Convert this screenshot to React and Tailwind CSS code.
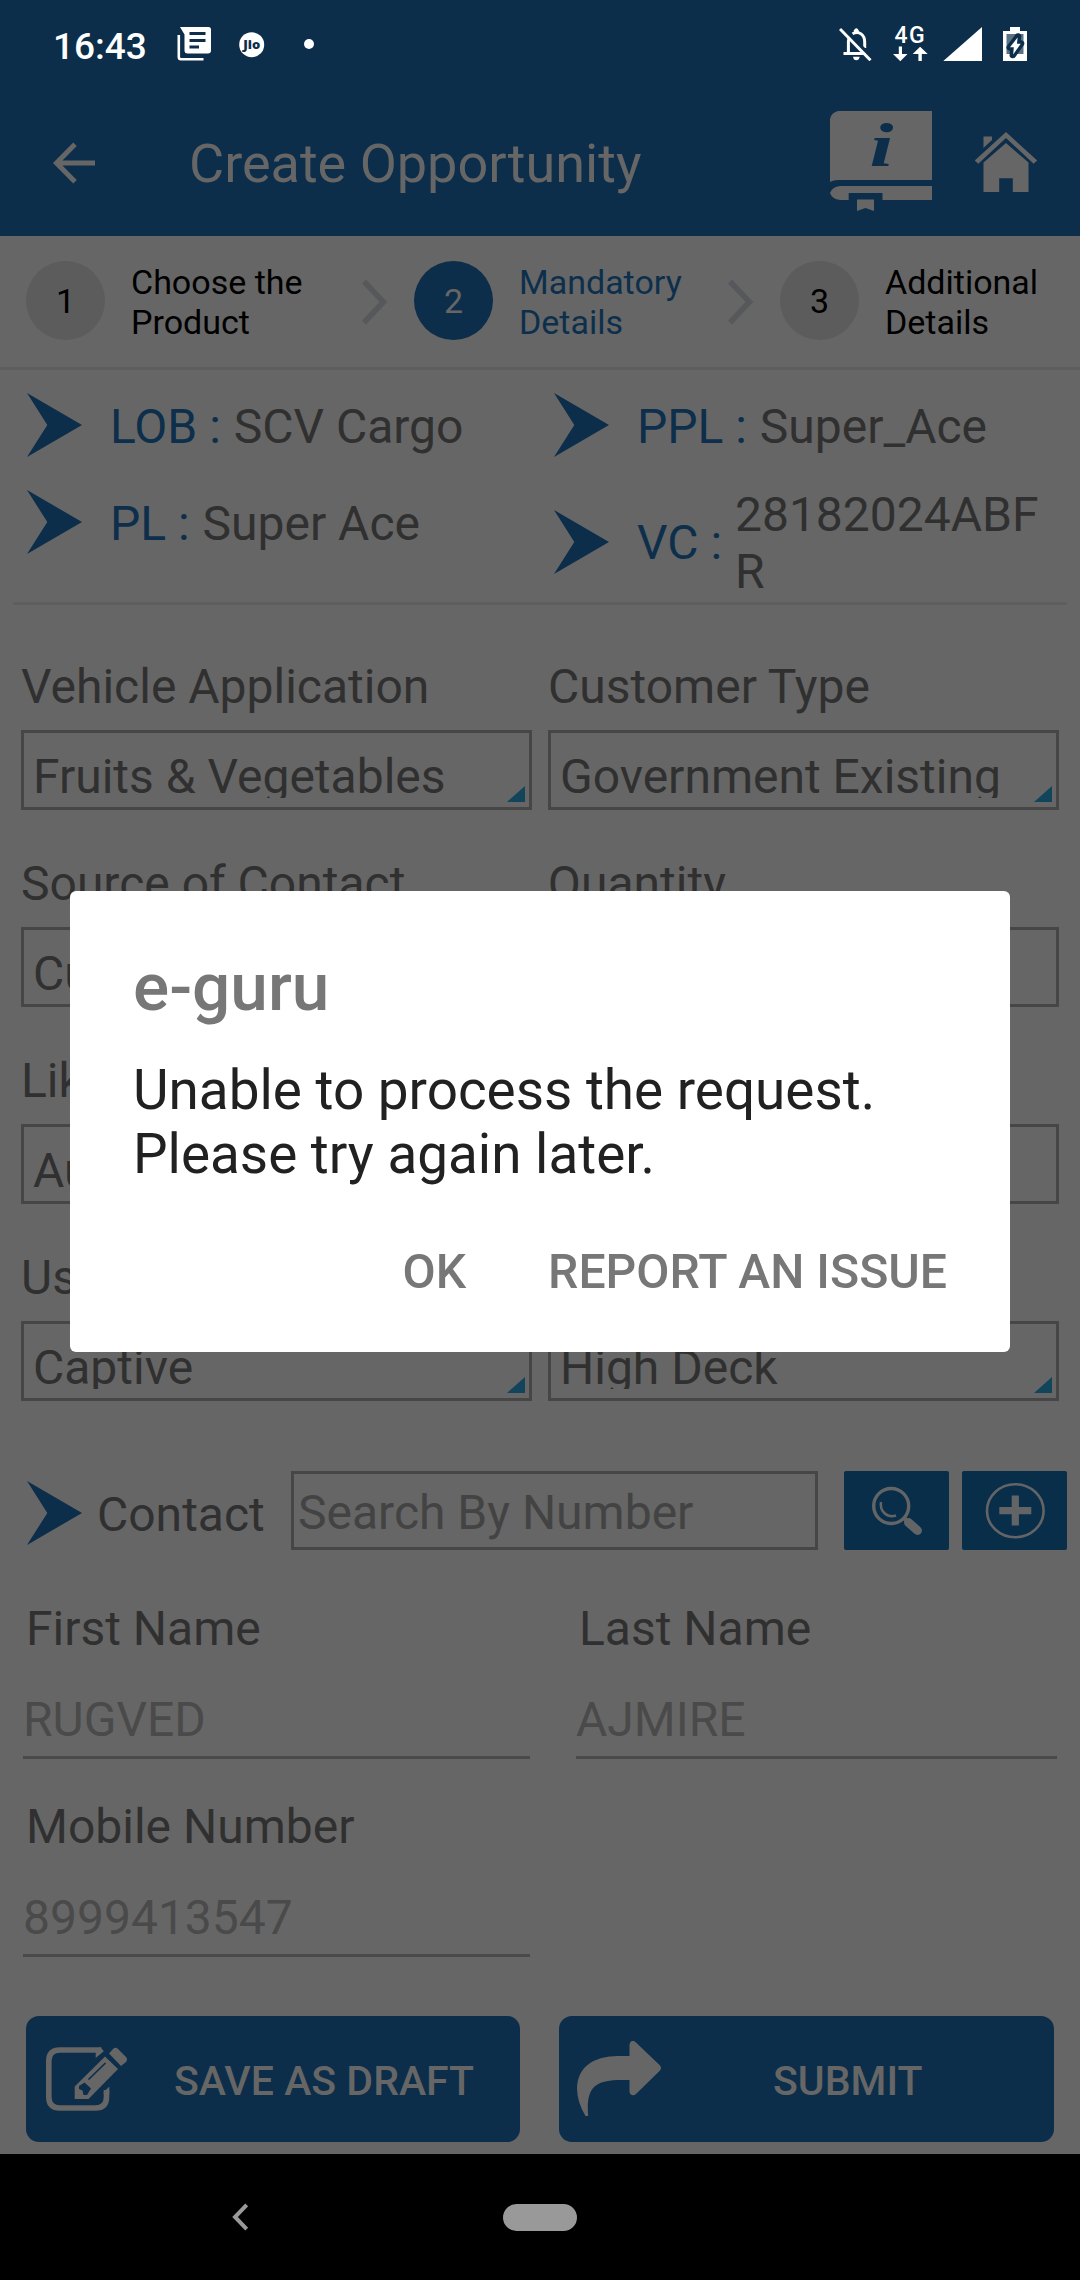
import React from "react";

function StatusBar() {
  return (
    <div className="flex h-[88px] items-center pl-[53px] pr-[53px] text-white">
      <div className="mt-[5px] w-[124px] text-[37px] font-medium leading-[44px]">16:43</div>
      <svg className="h-[34px] w-[34px]" viewBox="177 28 34 34">
        <path d="M180 28H208.500Q211 28 211 30.500V51.500Q211 54.500 208 54.500H187.500Q184.500 54.500 184.500 51.500V35.500Z" fill="#fff" />
        <path d="M189.500 34.500H205.500M189.500 41.500H205.500M189.500 48H199" stroke="#0c2e4a" strokeWidth="2.800" />
        <path d="M178.800 36V58Q178.800 60.200 181 60.200H203.500" fill="none" stroke="#fff" strokeWidth="2.600" />
      </svg>
      <svg className="ml-[28px] mt-px h-[26px] w-[26px]" viewBox="0 0 26 26">
        <circle cx="12.700" cy="12.700" r="12.500" fill="#fff" />
        <text x="12.700" y="17.200" textAnchor="middle" fontFamily="Open Sans, sans-serif" fontWeight="800" fontSize="13" fill="#0c2e4a">Jio</text>
      </svg>
      <div className="ml-[39px] h-[10px] w-[10px] rounded-full bg-white" />
      <svg className="ml-auto h-[34px] w-[33px]" viewBox="839 28 33 34">
        <path d="M843.500 54.500H863.500M848.400 55V42.500Q848.600 40 849.500 38M852.500 34.800C859 31 864.700 36 864.700 43V49" fill="none" stroke="#fff" strokeWidth="3" />
        <path d="M853.800 33V31.400Q856.300 27 858.800 31.400V33Z" fill="#fff" />
        <path d="M853 57.800H859.700Q859 61.300 856.300 61.300T853 57.800Z" fill="#fff" />
        <path d="M842.300 28.500L873 59" stroke="#0c2e4a" strokeWidth="3" />
        <path d="M840 30L870.500 61.200" stroke="#fff" strokeWidth="3" />
      </svg>
      <svg className="ml-[21px] h-[42px] w-[35px] overflow-visible" viewBox="893 23 35 42">
        <text x="894.500" y="43" fontFamily="Roboto, sans-serif" fontWeight="500" fontSize="23" letterSpacing="1.500" fill="#fff">4G</text>
        <path d="M898.800 46.500H902V54H907.500L900.300 61.300L893 54H898.800Z" fill="#fff" />
        <path d="M918.400 61H921.800V54H927.700L920.100 46.800L912.700 54H918.400Z" fill="#fff" />
      </svg>
      <svg className="ml-[15px] h-[34px] w-[39px]" viewBox="943 27 39 34">
        <path d="M943.300 61H982V27Z" fill="#fff" />
      </svg>
      <svg className="ml-[21px] h-[34px] w-[24px]" viewBox="1003 27 24 34">
        <path d="M1003 31H1010V27H1020V31H1027V61H1003Z" fill="#fff" />
        <path d="M1006.500 34H1023.500V54H1006.500Z" fill="#5b7285" />
        <path d="M1018 36.500L1009.800 47.500H1013.500L1012.800 55L1021 43.500H1017Z" fill="#0c2e4a" stroke="#0c2e4a" strokeWidth="6.500" strokeLinejoin="round" />
        <path d="M1017.600 37.500L1010 47.300H1013.800L1013.200 54.500L1020.700 43.700H1017Z" fill="#fff" />
      </svg>
    </div>
  );
}

function TitleBar() {
  return (
    <div className="flex h-[148px] items-center pl-[53px] pr-[42px]">
      <svg className="mt-px h-[42px] w-[43px]" viewBox="53 141.500 43 42" fill="none" stroke="#666666" strokeWidth="5">
        <path d="M95 162.500H57M75 143.700L56.500 162.500L75 181.300" />
      </svg>
      <h1 className="ml-[93px] mt-[3px] text-[54px] leading-[64px] text-[#666666]">Create Opportunity</h1>
      <svg className="ml-auto h-[102px] w-[102px]" viewBox="830 111 102 102" fill="#666666">
        <path d="M838 111H932V180H838Q833 180 830 182V119Q831 113 838 111Z" />
        <path d="M932 186V200H882.500V193H848.700V200H840Q832 199 830 193Q832 187 840 186Z" />
        <path d="M857 199.500H874V211L865.500 208L857 211Z" />
        <text x="869.500" y="166" fontFamily="Liberation Serif, serif" fontWeight="700" fontStyle="italic" fontSize="62" textLength="24" lengthAdjust="spacingAndGlyphs" fill="#0c2e4a">i</text>
      </svg>
      <svg className="ml-[43px] h-[62px] w-[63px]" viewBox="975 131 63 62" fill="#666666">
        <path d="M974.800 160.500L1006 132L1037.200 160.500L1033.600 163.800L1006 138L978.300 163.800Z" />
        <path d="M983.500 136.500H992V140L983.500 148Z" />
        <path d="M1006 143L1028.500 162.500V192H1012.800V178.300H999.200V192H983.500V162.500Z" />
      </svg>
    </div>
  );
}

function StepChevron() {
  return (
    <svg className="mr-[26px] h-[46px] w-[27px] shrink-0" viewBox="0 0 27 46" fill="none" stroke="#56585b" strokeWidth="5.500">
      <path d="M3 2.500L22.500 23L3 43.500" />
    </svg>
  );
}

function Stepper() {
  return (
    <div className="flex h-[134px] items-center border-b-[3px] border-[#5e5e5e] pl-[26px] text-[34px] leading-[40px] text-black">
      <div className="-mt-[2px] mr-[26px] flex h-[79px] w-[79px] shrink-0 items-center justify-center rounded-full bg-[#5c5c5c]">1</div>
      <div className="w-[230px] shrink-0">Choose the<br />Product</div>
      <StepChevron />
      <div className="-mt-[2px] mr-[26px] flex h-[79px] w-[79px] shrink-0 items-center justify-center rounded-full bg-[#0c2e4a] text-[#666666]">2</div>
      <div className="w-[208px] shrink-0 text-[#0d2f4c]">Mandatory<br />Details</div>
      <StepChevron />
      <div className="-mt-[2px] mr-[26px] flex h-[79px] w-[79px] shrink-0 items-center justify-center rounded-full bg-[#5c5c5c]">3</div>
      <div>Additional<br />Details</div>
    </div>
  );
}

function Arrowhead() {
  return (
    <svg className="h-[64px] w-[55px] shrink-0" viewBox="0 0 55 64" fill="#0c2e4a">
      <path d="M0 0L55 32L0 64L20.300 32Z" />
    </svg>
  );
}

function Info({ label, value }) {
  return (
    <div className="flex items-center">
      <Arrowhead />
      <span className="ml-[28px] mt-[4px] shrink-0 whitespace-pre text-[#0d2f4c]">{label} : </span>
      <span className="ml-px mt-[4px] break-all text-[#303030]">{value}</span>
    </div>
  );
}

function Summary() {
  return (
    <div className="mx-[13px] grid h-[235px] grid-cols-[527px_1fr] border-b-[3px] border-[#5e5e5e] pl-[14px] pt-[23px] text-[48px] leading-[56.500px]">
      <div className="flex flex-col gap-[33px]">
        <Info label="LOB" value="SCV Cargo" />
        <Info label="PL" value="Super Ace" />
      </div>
      <div className="flex flex-col gap-[26px] pr-[10px]">
        <Info label="PPL" value="Super_Ace" />
        <Info label="VC" value="28182024ABFR" />
      </div>
    </div>
  );
}

function Field({ label, value, select = true }) {
  return (
    <div className="h-[197px]">
      <div className="h-[56px] whitespace-nowrap leading-[58px]">{label}</div>
      <div className="relative mt-[16px] h-[80px] border-[3px] border-[#464646]">
        <div className="h-[65px] overflow-hidden whitespace-nowrap pl-[9px] pt-[16px] leading-[56px]">{value}</div>
        {select && (
          <svg className="absolute bottom-[5px] right-[4px] h-[16px] w-[18px]" viewBox="0 0 18 16" fill="#12455c">
            <path d="M0 16L18 0V16Z" />
          </svg>
        )}
      </div>
    </div>
  );
}

function Fields() {
  return (
    <div className="grid grid-cols-[511px_511px] gap-x-[16px] pl-[21px] pt-[53px] text-[48px] text-[#303030]">
      <Field label="Vehicle Application" value="Fruits & Vegetables" />
      <Field label="Customer Type" value="Government Existing" />
      <Field label="Source of Contact" value="Cu" select={false} />
      <Field label="Quantity" value="" select={false} />
      <Field label="Lik" value="Au" select={false} />
      <Field label="" value="" select={false} />
      <Field label="Us" value="Captive" />
      <Field label="" value="High Deck" />
    </div>
  );
}

function ContactSearch() {
  return (
    <div className="mt-[25px] flex h-[79px] text-[48px] leading-[56px] text-[#303030]">
      <div className="flex w-[291px] items-center pl-[27px] pt-[5px]">
        <Arrowhead />
        <span className="ml-[15px] mt-[3px]">Contact</span>
      </div>
      <div className="flex w-[527px] items-center border-[3px] border-[#464646] pl-[4px] pt-[5px] text-[#434343]">Search By Number</div>
      <button className="ml-[26px] flex w-[105px] items-center justify-center rounded-[2px] bg-[#092e4a]">
        <svg className="h-[50px] w-[54px]" viewBox="871 1485 54 50" fill="none" stroke="#626466">
          <circle cx="892.200" cy="1505" r="17.500" strokeWidth="3.400" />
          <path d="M882 1501C880.500 1510 888 1517.500 897 1514.500" strokeWidth="2.500" />
          <path d="M904.500 1516.500L909 1521" strokeWidth="4" />
          <path d="M909.500 1521.500L918.500 1529.500" strokeWidth="9" strokeLinecap="round" />
        </svg>
      </button>
      <button className="ml-[13px] flex w-[105px] items-center justify-center rounded-[2px] bg-[#092e4a]">
        <svg className="h-[58px] w-[60px]" viewBox="985 1482 60 58" fill="none" stroke="#626466">
          <ellipse cx="1015.300" cy="1510.700" rx="28.300" ry="26.500" strokeWidth="2.600" />
          <path d="M999.300 1510.700H1031.300M1015.300 1495.500V1525.500" strokeWidth="7.200" />
        </svg>
      </button>
    </div>
  );
}

function Detail({ label, value }) {
  return (
    <div className="flex flex-col border-b-[3px] border-[#4a4a4a] pb-[8px] leading-[56px]">
      <span className="ml-[3px] text-[#303030]">{label}</span>
      <span className="mt-[35px] text-[#4a4a4a]">{value}</span>
    </div>
  );
}

function Details() {
  return (
    <div className="grid grid-cols-[507px_481px] gap-x-[46px] gap-y-[40px] pl-[23px] pt-[51px] text-[48px]">
      <Detail label="First Name" value="RUGVED" />
      <Detail label="Last Name" value="AJMIRE" />
      <Detail label="Mobile Number" value="8999413547" />
    </div>
  );
}

function Actions() {
  return (
    <div className="mt-[59px] flex gap-[39px] pl-[26px] text-[41px] font-medium leading-[48px] text-[#666666]">
      <button className="flex h-[126px] w-[494px] items-center rounded-[13px] bg-[#0c2e4a] pl-[20px]">
        <svg className="h-[66px] w-[82px]" viewBox="46 2046 82 66" fill="#666666">
          <path d="M102 2049L98.500 2052V2050H60Q48.800 2050 48.800 2061V2097Q48.800 2108 60 2108H95.500Q106.500 2108 106.500 2097V2090" fill="none" stroke="#666666" strokeWidth="5.600" />
          <path d="M103.700 2094V2092L109.300 2086.500V2094Z" />
          <path d="M105 2056.500L118 2069L88.500 2099H74.700V2086.500Z" />
          <path d="M109 2053.500L113 2049Q115.500 2046.500 118 2049L126 2057Q128 2059.500 126 2062L121 2066Z" />
          <path d="M88.500 2079.500L105.500 2063" stroke="#0c2e4a" strokeWidth="1.700" />
          <path d="M79 2086L84.500 2082.500L91 2088.500L87 2095H83.500L82.500 2090.500L79 2089Z" fill="#0c2e4a" />
        </svg>
        <span className="ml-[46px] mt-[4px]">SAVE AS DRAFT</span>
      </button>
      <button className="flex h-[126px] w-[495px] items-center rounded-[13px] bg-[#0c2e4a] pl-[18px]">
        <svg className="h-[76px] w-[85px]" viewBox="577 2041 85 76" fill="#666666">
          <path d="M629.500 2056V2045Q630 2041 632.500 2041Q634 2040.500 636 2042.500L660 2065.500Q662 2068 660 2070.500L636 2094Q634 2096 632 2095Q629.500 2094.500 629.500 2091V2080H617C593 2081 586 2090 588.200 2116H585.500Q577 2102 577 2088C578 2066 594 2056.500 618 2056Z" />
        </svg>
        <span className="ml-[111px] mt-[4px]">SUBMIT</span>
      </button>
    </div>
  );
}

function NavBar() {
  return (
    <div className="mt-[12px] flex h-[126px] items-center bg-black pl-[232px]">
      <svg className="h-[28px] w-[17px]" viewBox="0 0 17 28" fill="none" stroke="#999999" strokeWidth="4">
        <path d="M14.700 1.800L3 14L14.700 26.200" />
      </svg>
      <div className="ml-[254px] h-[27px] w-[74px] rounded-full bg-[#999999]" />
    </div>
  );
}

function AlertDialog() {
  return (
    <div className="absolute left-[70px] top-[891px] flex h-[461px] w-[940px] flex-col rounded-[6px] bg-white pl-[63px] pt-[56px]">
      <h2 className="text-[67.500px] font-medium leading-[80px] text-[#777777]">e-guru</h2>
      <p className="mt-[31px] text-[54.850px] leading-[64px] text-[#212121]">
        Unable to process the request.<br />Please try again later.
      </p>
      <div className="mt-[58px] flex justify-end gap-[82px] pr-[63px] text-[48.150px] font-medium leading-[56px] text-[#777777]">
        <span>OK</span>
        <span>REPORT AN ISSUE</span>
      </div>
    </div>
  );
}

export default function App() {
  return (
    <div className="relative h-[2280px] w-[1080px] overflow-hidden bg-[#666666] font-['Roboto',sans-serif]">
      <header className="h-[236px] bg-[#0c2e4a]">
        <StatusBar />
        <TitleBar />
      </header>
      <Stepper />
      <Summary />
      <Fields />
      <ContactSearch />
      <Details />
      <Actions />
      <NavBar />
      <AlertDialog />
    </div>
  );
}
